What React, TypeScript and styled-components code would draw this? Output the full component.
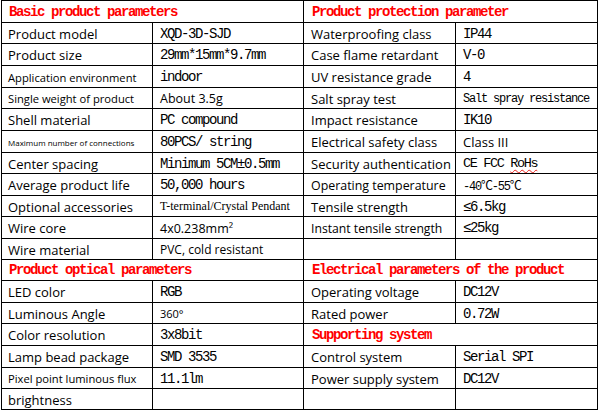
import React from "react";
import styled, { createGlobalStyle } from "styled-components";

const GlobalStyle = createGlobalStyle`
  html, body { margin: 0; padding: 0; background: #ffffff; }
  body { font-family: "Open Sans", "Liberation Sans", sans-serif; color: #000; }
`;

const ROW_HEIGHTS = [21, 20, 21, 21, 20, 21, 21, 20, 21, 20, 21, 20, 20, 21, 20, 21, 21, 20, 20];

const Page = styled.div`
  padding: 0 0 0 1px;
  width: 599px;
  height: 411px;
  box-sizing: border-box;
`;

const Sheet = styled.div`
  display: grid;
  grid-template-columns: 150px 150px 151px 141px;
  grid-template-rows: ${ROW_HEIGHTS.map((h) => `${h}px`).join(" ")};
  gap: 1px;
  background: #000;
  border: 1px solid #000;
  width: max-content;
`;

const BaseCell = styled.div`
  background: #fff;
  display: flex;
  align-items: center;
  padding: 0 0 0 6px;
  overflow: hidden;
  white-space: pre;
  min-width: 0;
`;

const SectionTitle = styled(BaseCell)<{ $inset: number }>`
  grid-column: span 2;
  font-family: "Liberation Mono", "Courier New", monospace;
  font-weight: bold;
  font-size: 14px;
  letter-spacing: -1.4px;
  color: #ff0000;
  padding-left: ${(p) => p.$inset}px;
`;

const Label = styled(BaseCell)<{ $size: number; $inset: number }>`
  font-family: "Open Sans", "Liberation Sans", sans-serif;
  font-size: ${(p) => p.$size}px;
  padding-left: ${(p) => p.$inset}px;
  padding-top: 1px;
`;

type ValueFont = "mono" | "sans" | "serif";

const FONTS: Record<ValueFont, string> = {
  mono: `"Liberation Mono", "Courier New", "Noto Sans CJK SC", monospace`,
  sans: `"Open Sans", "Liberation Sans", sans-serif`,
  serif: `"Liberation Serif", "Times New Roman", serif`,
};

const Value = styled(BaseCell)<{ $font: ValueFont; $size: number }>`
  font-family: ${(p) => FONTS[p.$font]};
  font-size: ${(p) => p.$size}px;
  letter-spacing: ${(p) => (p.$font === "mono" ? `${-p.$size * 0.1}px` : "0")};
  padding-left: 7px;
  padding-top: 1px;
`;

const Squiggle = styled.span`
  text-decoration: underline wavy #e8201a;
  text-decoration-thickness: 1px;
  text-underline-offset: 2px;
`;

type KV = {
  t: "kv";
  label: string;
  ls?: number;
  value: React.ReactNode;
  vf?: ValueFont;
  vs?: number;
};
type Spec = { t: "h"; text: string } | KV | { t: "empty" };

const kv = (label: string, value: React.ReactNode, opts: Partial<KV> = {}): KV => ({
  t: "kv",
  label,
  value,
  ...opts,
});

const LEFT: Spec[] = [
  { t: "h", text: "Basic product parameters" },
  kv("Product model", "XQD-3D-SJD"),
  kv("Product size", "29mm*15mm*9.7mm"),
  kv("Application environment", "indoor", { ls: 11.2 }),
  kv("Single weight of product", "About 3.5g", { ls: 11.2, vf: "sans", vs: 12.5 }),
  kv("Shell material", "PC compound"),
  kv("Maximum number of connections", "80PCS/ string", { ls: 8 }),
  kv("Center spacing", "Minimum 5CM±0.5mm"),
  kv("Average product life", "50,000 hours"),
  kv("Optional accessories", "T-terminal/Crystal Pendant", { vf: "serif", vs: 12 }),
  kv("Wire core", "4x0.238mm²", { vf: "sans", vs: 12.5 }),
  kv("Wire material", "PVC, cold resistant", { vf: "sans", vs: 12 }),
  { t: "h", text: "Product optical parameters" },
  kv("LED color", "RGB"),
  kv("Luminous Angle", "360°", { vf: "sans", vs: 11 }),
  kv("Color resolution", "3x8bit"),
  kv("Lamp bead package", "SMD 3535"),
  kv("Pixel point luminous flux", "11.1lm", { ls: 11.2 }),
  kv("brightness", ""),
];

const RIGHT: Spec[] = [
  { t: "h", text: "Product protection parameter" },
  kv("Waterproofing class", "IP44"),
  kv("Case flame retardant", "V-0"),
  kv("UV resistance grade", "4"),
  kv("Salt spray test", "Salt spray resistance", { vs: 12 }),
  kv("Impact resistance", "IK10"),
  kv("Electrical safety class", "Class III", { vf: "sans", vs: 13 }),
  kv(
    "Security authentication",
    <>
      {"CE FCC "}
      <Squiggle>RoHs</Squiggle>
    </>,
    { vs: 13.5 }
  ),
  kv("Operating temperature", "-40℃-55℃", { ls: 12.4, vs: 12 }),
  kv("Tensile strength", "≤6.5kg"),
  kv("Instant tensile strength", "≤25kg", { ls: 12.2 }),
  { t: "empty" },
  { t: "h", text: "Electrical parameters of the product" },
  kv("Operating voltage", "DC12V"),
  kv("Rated power", "0.72W"),
  { t: "h", text: "Supporting system" },
  kv("Control system", "Serial SPI"),
  kv("Power supply system", "DC12V"),
  { t: "empty" },
];

function renderSpec(spec: Spec, key: string, inset: number) {
  if (spec.t === "h") {
    return (
      <SectionTitle key={key} $inset={inset + 1}>
        {spec.text}
      </SectionTitle>
    );
  }
  if (spec.t === "empty") {
    return [
      <Label key={`${key}-l`} $size={13} $inset={inset} />,
      <Value key={`${key}-v`} $font="mono" $size={14} />,
    ];
  }
  return [
    <Label key={`${key}-l`} $size={spec.ls ?? 13} $inset={inset}>
      {spec.label}
    </Label>,
    <Value key={`${key}-v`} $font={spec.vf ?? "mono"} $size={spec.vs ?? 14}>
      {spec.value}
    </Value>,
  ];
}

export default function App() {
  return (
    <>
      <GlobalStyle />
      <Page>
        <Sheet>
          {ROW_HEIGHTS.map((_, i) => (
            <React.Fragment key={i}>
              {renderSpec(LEFT[i], `l${i}`, 6)}
              {renderSpec(RIGHT[i], `r${i}`, 7)}
            </React.Fragment>
          ))}
        </Sheet>
      </Page>
    </>
  );
}
